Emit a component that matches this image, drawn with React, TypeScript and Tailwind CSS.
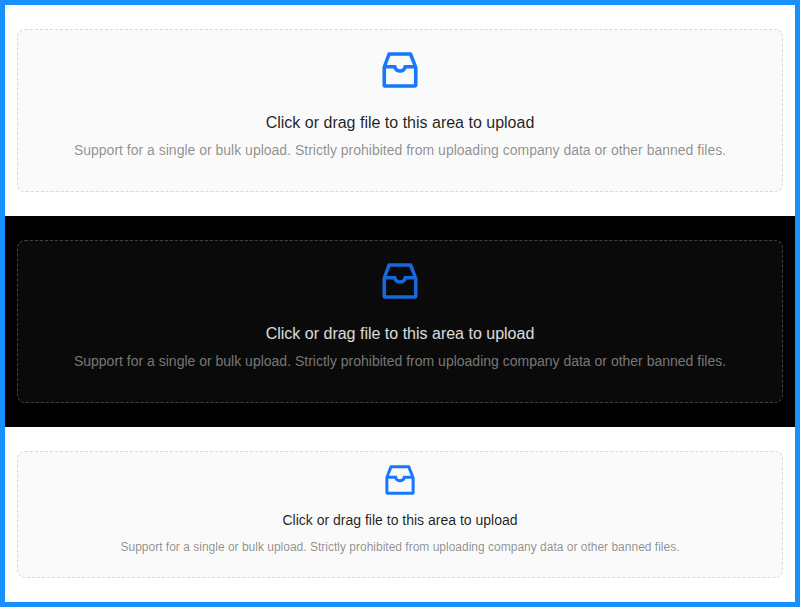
import React from "react";
import { AiOutlineInbox } from "react-icons/ai";

type Variant = "light" | "dark" | "compact";

const styles: Record<Variant, { panel: string; box: string; icon: string; title: string; hint: string }> = {
  light: {
    panel: "h-[211px] bg-white",
    box: "border-[#d9d9d9] bg-[#fafafa] pt-4",
    icon: "mb-[17px] h-12 w-12 text-[#1677ff]",
    title: "mb-1 text-[16px] leading-6 text-black/88",
    hint: "text-[14px] leading-[22px] text-black/45",
  },
  dark: {
    panel: "h-[211px] bg-black",
    box: "border-[#424242] bg-[#0a0a0a] pt-4",
    icon: "mb-[17px] h-12 w-12 text-[#1668dc]",
    title: "mb-1 text-[16px] leading-6 text-white/85",
    hint: "text-[14px] leading-[22px] text-white/45",
  },
  compact: {
    panel: "h-[175px] bg-white",
    box: "border-[#d9d9d9] bg-[#fafafa] pt-2",
    icon: "mb-[9px] h-10 w-10 text-[#1677ff]",
    title: "mb-1.5 text-[14px] leading-[22px] text-black/88",
    hint: "text-[12px] leading-5 text-black/45",
  },
};

function Dragger({ variant }: { variant: Variant }) {
  const s = styles[variant];
  return (
    <section className={`px-3 py-6 ${s.panel}`}>
      <div className={`flex h-full cursor-pointer flex-col items-center rounded-lg border border-dashed text-center ${s.box}`}>
        <AiOutlineInbox className={s.icon} aria-hidden="true" />
        <p className={s.title}>Click or drag file to this area to upload</p>
        <p className={s.hint}>
          Support for a single or bulk upload. Strictly prohibited from uploading company data or other banned files.
        </p>
      </div>
    </section>
  );
}

export default function App() {
  return (
    <main className="h-[607px] w-[800px] overflow-hidden border-[5px] border-[#1890ff] font-['Liberation_Sans',Arial,sans-serif]">
      <Dragger variant="light" />
      <Dragger variant="dark" />
      <Dragger variant="compact" />
    </main>
  );
}
